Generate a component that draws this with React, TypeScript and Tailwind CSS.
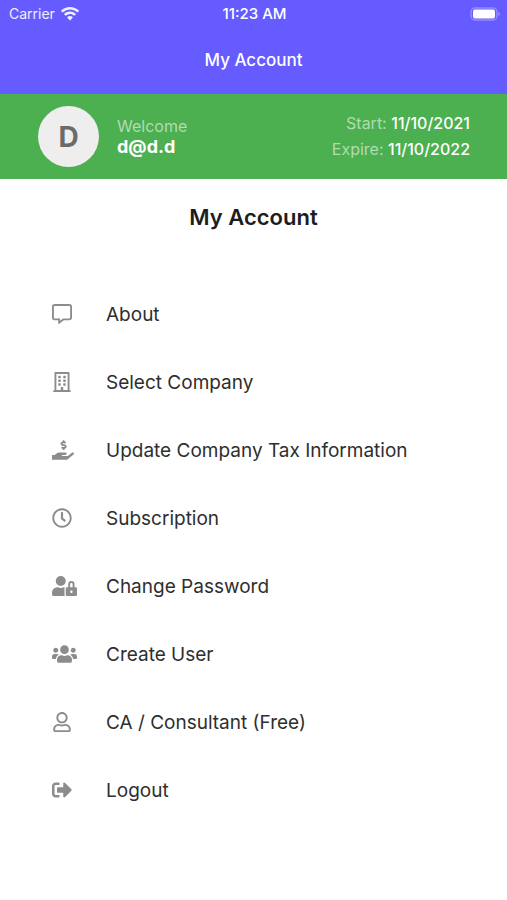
import React from "react";
import {
  FaHandHoldingUsd,
  FaRegBuilding,
  FaRegClock,
  FaRegCommentAlt,
  FaRegUser,
  FaSignOutAlt,
  FaUserLock,
  FaUsers,
} from "react-icons/fa";

const MenuItems = [
  { label: "About", Icon: FaRegCommentAlt, size: "w-5" },
  { label: "Select Company", Icon: FaRegBuilding, size: "w-5" },
  {
    label: "Update Company Tax Information",
    Icon: FaHandHoldingUsd,
    size: "w-[22px]",
  },
  { label: "Subscription", Icon: FaRegClock, size: "w-5" },
  { label: "Change Password", Icon: FaUserLock, size: "w-[25px]" },
  { label: "Create User", Icon: FaUsers, size: "w-[25px]" },
  { label: "CA / Consultant (Free)", Icon: FaRegUser, size: "w-5" },
  { label: "Logout", Icon: FaSignOutAlt, size: "w-5" },
];

const WifiIcon = () => (
  <svg className="h-[14px] w-[18px]" viewBox="0 0 18 14" fill="currentColor">
    <path d="M9 0C5.6 0 2.500 1.300.2 3.500a.5.500 0 0 0 0 .7l1.100 1.100c.2.200.5.200.7 0A10.100 10.100 0 0 1 9 2.600c2.700 0 5.200 1 7 2.700.2.200.5.200.7 0l1.100-1.100a.5.500 0 0 0 0-.7C15.500 1.300 12.400 0 9 0Z" />
    <path d="M9 4.500c-2.200 0-4.200.8-5.700 2.200a.5.500 0 0 0 0 .7l1.100 1.100c.2.200.5.200.7 0A5.800 5.800 0 0 1 9 7c1.500 0 2.900.6 3.900 1.500.2.200.5.200.7 0l1.100-1.100a.5.500 0 0 0 0-.7A8.300 8.300 0 0 0 9 4.500Z" />
    <path d="M9 9c-1 0-1.900.4-2.600 1a.5.500 0 0 0 0 .7l2.200 2.500c.2.200.6.200.8 0l2.200-2.500a.5.500 0 0 0 0-.7C10.900 9.400 10 9 9 9Z" />
  </svg>
);

const BatteryIcon = () => (
  <svg className="h-[14px] w-[30px]" viewBox="0 0 30 14" fill="none">
    <rect x="1" y="1" width="26" height="12" rx="4" stroke="white" strokeWidth="1.500" strokeOpacity="0.300" />
    <rect x="3" y="2.500" width="22" height="9" rx="2" fill="white" />
    <path d="M28.500 5v4c.8-.4 1.300-1.100 1.300-2s-.5-1.600-1.300-2Z" fill="white" fillOpacity="0.400" />
  </svg>
);

const Header = () => {
  return (
    <header className="bg-[#655bff] text-white">
      <div className="grid grid-cols-3 items-center pt-1 pl-[9px] pr-[7px] text-sm leading-5">
        <span className="flex items-center gap-[6px] text-white/90">
          Carrier
          <WifiIcon />
        </span>
        <span className="text-center text-[15px] font-medium">11:23 AM</span>
        <span className="flex justify-end">
          <BatteryIcon />
        </span>
      </div>
      <p className="pt-6 pb-[22px] text-center text-[17px] leading-6 font-medium">
        My Account
      </p>
    </header>
  );
};

const ProfileBar = () => {
  return (
    <section className="flex items-center bg-[#4caf50] pr-[37px] pl-[38px] py-3">
      <div className="flex size-[61px] items-center justify-center rounded-full bg-[#eeeeee] text-[28px] font-bold text-[#6b6b6b]">
        D
      </div>
      <div className="ml-[18px] grow pb-0.5">
        <p className="text-base leading-[22px] text-[#b1dcb3]">Welcome</p>
        <p className="text-lg leading-5 font-bold text-white">d@d.d</p>
      </div>
      <div className="pb-0.5 text-right text-base leading-[26px] text-[#b1dcb3]">
        <p>
          Start: <span className="font-medium text-white">11/10/2021</span>
        </p>
        <p>
          Expire: <span className="font-medium text-white">11/10/2022</span>
        </p>
      </div>
    </section>
  );
};

const App = () => {
  return (
    <div className="min-h-screen bg-white font-['Inter',sans-serif]">
      <Header />
      <ProfileBar />
      <main>
        <h1 className="pt-5 text-center text-[22px] leading-9 font-semibold text-[#1d1d1d]">
          My Account
        </h1>
        <ul className="pt-[46px]">
          {MenuItems.map(({ label, Icon, size }) => (
            <li key={label}>
              <button
                type="button"
                className="flex w-full items-center py-5 pl-[52px] text-left text-[19px] leading-7 text-[#2e2e2e]"
              >
                <span className="w-[54px] pb-0.5 text-[#8c8c8c]">
                  <Icon className={`h-5 ${size}`} />
                </span>
                {label}
              </button>
            </li>
          ))}
        </ul>
      </main>
    </div>
  );
};

export default App;
